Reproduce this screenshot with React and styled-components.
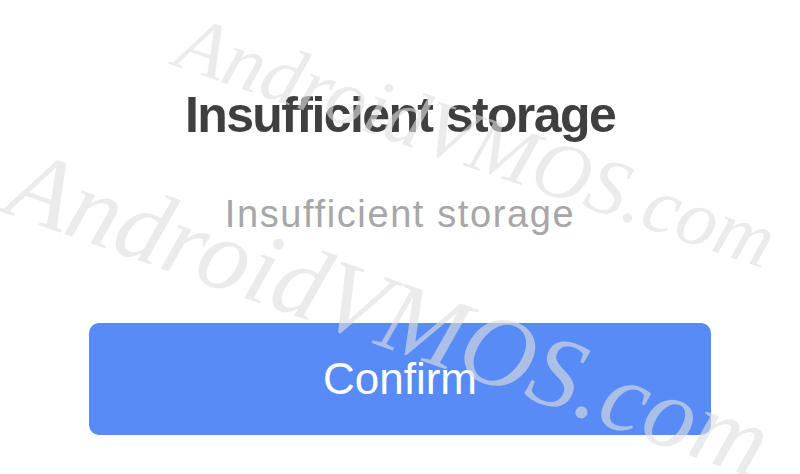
import React from 'react';
import styled, { createGlobalStyle } from 'styled-components';

const GlobalStyle = createGlobalStyle`
  html, body {
    margin: 0;
    padding: 0;
    background: #fff;
  }
  body {
    font-family: "Liberation Sans", Arial, sans-serif;
  }
`;

const Screen = styled.div`
  position: relative;
  width: 800px;
  height: 474px;
  overflow: hidden;
  background: #fff;
  display: flex;
  flex-direction: column;
  align-items: center;
  padding-top: 85px;
  box-sizing: border-box;
`;

const Title = styled.h1`
  margin: 0;
  font-size: 50px;
  line-height: 60px;
  font-weight: 700;
  color: #3f3f3f;
  letter-spacing: -1.6px;
  word-spacing: 1px;
  white-space: nowrap;
`;

const Message = styled.p`
  margin: 47px 0 0;
  font-size: 38px;
  line-height: 44px;
  color: #a7a7a7;
  letter-spacing: 1.6px;
  white-space: nowrap;
`;

const ConfirmButton = styled.button`
  margin-top: 87px;
  width: 622px;
  height: 112px;
  border: none;
  border-radius: 10px;
  background: #588bf5;
  color: #fff;
  font-family: "Liberation Sans", Arial, sans-serif;
  font-size: 44px;
  cursor: pointer;
`;

// the watermark lies over everything
const Watermark = styled.div`
  position: absolute;
  left: ${p => p.x}px;
  top: ${p => p.y}px;
  font-family: "Liberation Serif", "Times New Roman", serif;
  font-style: italic;
  font-size: ${p => p.size}px;
  line-height: 1;
  color: rgba(222, 222, 222, 0.62);
  white-space: nowrap;
  transform-origin: 0 0.84em;
  transform: rotate(${p => p.angle}deg);
  pointer-events: none;
`;

const App = () => {
  return (
    <>
      <GlobalStyle />
      <Screen>
        <Title>Insufficient storage</Title>
        <Message>Insufficient storage</Message>
        <ConfirmButton>Confirm</ConfirmButton>
        <Watermark x={172} y={-2} size={80} angle={19}>AndroidVMOS.com</Watermark>
        <Watermark x={2} y={127} size={102} angle={19.5}>AndroidVMOS.com</Watermark>
      </Screen>
    </>
  );
};

export default App;
